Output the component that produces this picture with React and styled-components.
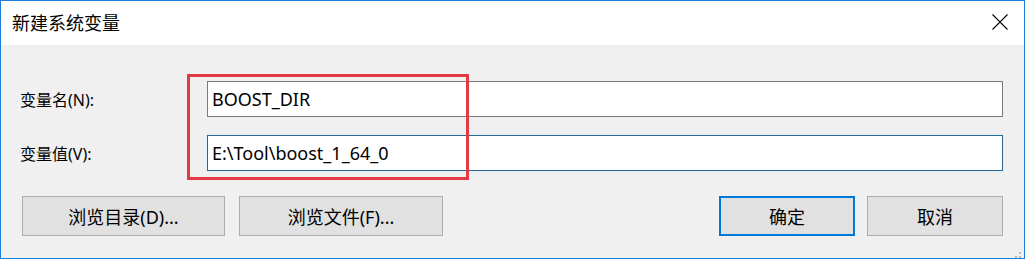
import styled, { createGlobalStyle } from "styled-components";

const GlobalStyle = createGlobalStyle`
  html, body {
    margin: 0;
    padding: 0;
    background: #f0f0f0;
  }
  * {
    box-sizing: border-box;
  }
`;

const FONT = `"Noto Sans", "Noto Sans CJK SC", sans-serif`;

const Window = styled.div`
  width: 1025px;
  height: 259px;
  border: 1px solid #1c7ed6;
  background: #f0f0f0;
  display: flex;
  flex-direction: column;
  font-family: ${FONT};
  color: #000;
`;

const TitleBar = styled.div`
  height: 44px;
  background: #fff;
  display: flex;
  align-items: center;
  justify-content: space-between;
  padding: 0 16px 0 11px;
  flex-shrink: 0;
`;

const Title = styled.div`
  font-size: 18px;
  line-height: 1;
  margin-top: -1px;
`;

const CloseButton = styled.div`
  width: 16px;
  height: 16px;
  display: flex;
  margin-top: -2px;
`;

const Body = styled.div`
  position: relative;
  flex: 1;
  padding: 36px 21px 0 19px;
  display: flex;
  flex-direction: column;
`;

const Field = styled.div`
  display: flex;
  align-items: center;
  height: 36px;
  margin-bottom: 18px;
`;

const Label = styled.label`
  width: 187px;
  font-size: 16px;
  flex-shrink: 0;
`;

const Input = styled.div`
  flex: 1;
  height: 36px;
  background: #fff;
  border: 1px solid ${(p) => (p.$focused ? "#2f6689" : "#7a7a7a")};
  box-shadow: ${(p) => (p.$focused ? "0 0 0 1px #dcefff" : "none")};
  display: flex;
  align-items: center;
  padding-left: 4px;
  font-size: 18px;
  white-space: pre;
`;

const Highlight = styled.div`
  position: absolute;
  left: 186px;
  top: 29px;
  width: 282px;
  height: 106px;
  border: 3px solid #e23b44;
  pointer-events: none;
`;

const ButtonRow = styled.div`
  display: flex;
  align-items: center;
  margin-top: 7px;
  padding-left: 2px;
`;

const Button = styled.div`
  width: ${(p) => p.$width}px;
  height: 40px;
  margin-right: ${(p) => p.$gap || 0}px;
  margin-left: ${(p) => (p.$push ? "auto" : "0")};
  background: #e1e1e1;
  border: ${(p) => (p.$primary ? "2px solid #0078d7" : "1px solid #adadad")};
  display: flex;
  align-items: center;
  justify-content: center;
  font-size: 18px;
`;

const Grip = styled.div`
  position: absolute;
  right: 3px;
  bottom: 3px;
  width: 10px;
  height: 10px;
`;

export default function App() {
  return (
    <>
      <GlobalStyle />
      <Window>
        <TitleBar>
          <Title>新建系统变量</Title>
          <CloseButton>
            <svg width="16" height="16" viewBox="0 0 16 16">
              <path d="M0.5 0.5 L15.5 15.5 M15.5 0.5 L0.5 15.5" stroke="#000" strokeWidth="1.1" />
            </svg>
          </CloseButton>
        </TitleBar>
        <Body>
          <Field>
            <Label>变量名(N):</Label>
            <Input>BOOST_DIR</Input>
          </Field>
          <Field>
            <Label>变量值(V):</Label>
            <Input $focused>E:\Tool\boost_1_64_0</Input>
          </Field>
          <ButtonRow>
            <Button $width={203} $gap={14}>浏览目录(D)...</Button>
            <Button $width={204}>浏览文件(F)...</Button>
            <Button $width={136} $gap={12} $push $primary>确定</Button>
            <Button $width={136}>取消</Button>
          </ButtonRow>
          <Highlight />
          <Grip>
            <svg width="10" height="10" viewBox="0 0 10 10">
              {[[8, 0], [8, 4], [4, 4], [8, 8], [4, 8], [0, 8]].map(([x, y]) => (
                <rect key={`${x}-${y}`} x={x} y={y} width="2" height="2" fill="#b8b8b8" />
              ))}
            </svg>
          </Grip>
        </Body>
      </Window>
    </>
  );
}
